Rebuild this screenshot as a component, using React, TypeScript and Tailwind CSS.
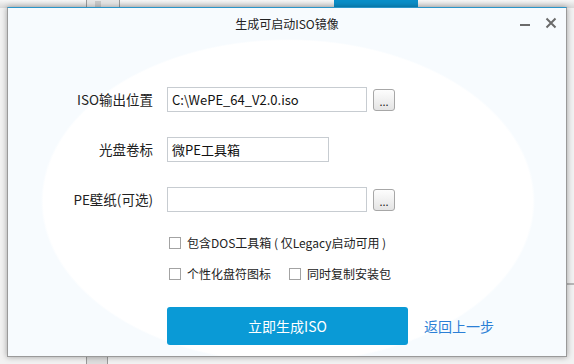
import React from "react";

const font = { fontFamily: '"Microsoft YaHei", "Noto Sans CJK SC", "Noto Sans", sans-serif' };

function Browse() {
  return (
    <button className="ml-[6px] flex h-[22px] w-[22px] items-end justify-center rounded-[3px] border border-[#a7a7a7] bg-[linear-gradient(#fdfdfd,#e4e4e4)] pb-[3px] text-[11px] leading-none text-[#222]">
      ...
    </button>
  );
}

function Check({ label }: { label: string }) {
  return (
    <label className="flex items-center">
      <span className="h-[12px] w-[12px] border border-[#a3a3a3] bg-white" />
      <span className="ml-[6px] whitespace-pre text-[12px] text-[#222]">{label}</span>
    </label>
  );
}

export default function App() {
  return (
    <div className="relative h-[364px] w-[574px] overflow-hidden bg-[#f2f2f2]" style={font}>
      {/* desktop content behind the dialog */}
      <div className="absolute left-0 top-0 h-[8px] w-[574px] bg-[linear-gradient(#f6f6f6,#d9d9d9)]" />
      <div className="absolute left-[86px] top-0 h-[8px] w-[34px] border-x border-[#9a9a9a] bg-[#e6e6e6]" />
      <div className="absolute left-[95px] top-[1px] h-[6px] w-[6px] bg-[#c9c9c9]" />
      <div className="absolute left-[334px] top-0 h-[8px] w-[84px] bg-[#0a8fc9]" />
      <div className="absolute left-[86px] top-[357px] h-[7px] w-[22px] border-x border-[#9a9a9a] bg-[#dedede]" />
      <div className="absolute left-[567px] top-[283px] h-[2px] w-[7px] bg-[#b8b8b8]" />

      {/* dialog window */}
      <div className="absolute left-[7px] top-[7px] flex h-[350px] w-[560px] flex-col border border-[#9a9a9a] border-t-[#2a95c9] bg-[#f7fbfe] bg-[radial-gradient(ellipse_247px_162px_at_280px_193px,#ffffff_99%,#f7fbfe_100%)] shadow-[0_0_6px_rgba(0,0,0,0.35)]">
        {/* title bar */}
        <div className="relative flex h-[30px] items-center justify-center">
          <span className="pt-[2px] text-[12px] text-[#222]">生成可启动ISO镜像</span>
          <div className="absolute right-[9px] top-[9px] flex items-center gap-[14px]">
            <svg width="12" height="12" viewBox="0 0 12 12">
              <rect x="1" y="7" width="10" height="2" fill="#6b6b6b" />
            </svg>
            <svg width="12" height="12" viewBox="0 0 12 12">
              <path d="M1.5 1.5 L10.5 10.5 M10.5 1.5 L1.5 10.5" stroke="#6b6b6b" strokeWidth="2" />
            </svg>
          </div>
        </div>

        {/* form */}
        <div className="mt-[49px] flex flex-col">
          <div className="flex h-[25px] items-center">
            <span className="w-[145px] text-right text-[13.5px] text-[#222]">ISO输出位置</span>
            <div className="ml-[14px] flex h-[25px] w-[200px] items-center border border-[#c7ccd1] bg-white px-[4px] text-[13px] text-[#111]">
              C:\WePE_64_V2.0.iso
            </div>
            <Browse />
          </div>

          <div className="mt-[25px] flex h-[25px] items-center">
            <span className="w-[145px] text-right text-[13.5px] text-[#222]">光盘卷标</span>
            <div className="ml-[14px] flex h-[25px] w-[162px] items-center border border-[#c7ccd1] bg-white px-[4px] text-[13px] text-[#111]">
              微PE工具箱
            </div>
          </div>

          <div className="mt-[25px] flex h-[25px] items-center">
            <span className="w-[145px] text-right text-[13.5px] text-[#222]">PE壁纸(可选)</span>
            <div className="ml-[14px] h-[25px] w-[200px] border border-[#c7ccd1] bg-white" />
            <Browse />
          </div>

          <div className="ml-[161px] mt-[23px] flex h-[16px] items-center">
            <Check label="包含DOS工具箱 ( 仅Legacy启动可用 )" />
          </div>

          <div className="ml-[161px] mt-[15px] flex h-[16px] items-center gap-[18px]">
            <Check label="个性化盘符图标" />
            <Check label="同时复制安装包" />
          </div>

          <div className="ml-[159px] mt-[25px] flex items-center">
            <button className="flex h-[38px] w-[241px] items-center justify-center rounded-[3px] bg-[#0a9ad6] text-[14px] text-white">
              立即生成ISO
            </button>
            <span className="ml-[16px] text-[14px] text-[#2b7fd6]">返回上一步</span>
          </div>
        </div>
      </div>
    </div>
  );
}
